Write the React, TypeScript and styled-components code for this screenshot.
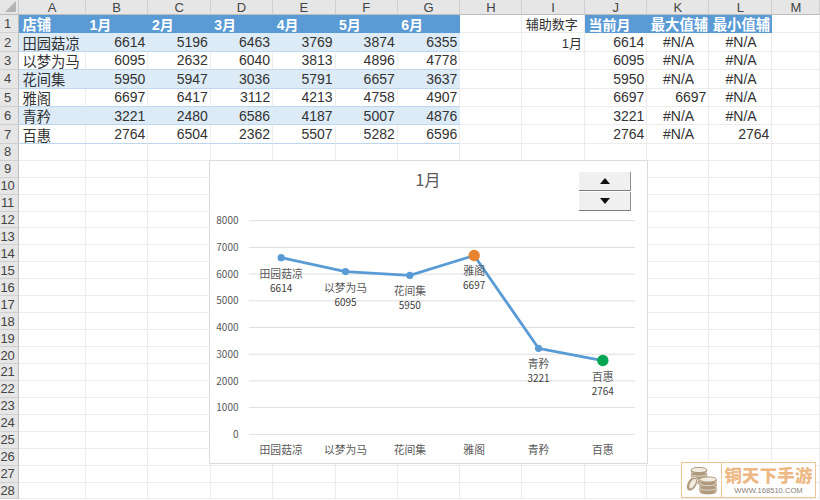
import React from 'react';
import styled, { createGlobalStyle } from 'styled-components';

const GlobalStyle = createGlobalStyle`
  html, body {
    margin: 0;
    padding: 0;
    background: #fff;
    overflow: hidden;
  }
  body {
    font-family: "Liberation Sans", "Noto Sans CJK SC", sans-serif;
  }
`;

const COLS = ['A', 'B', 'C', 'D', 'E', 'F', 'G', 'H', 'I', 'J', 'K', 'L', 'M'];
const MONTHS = ['1月', '2月', '3月', '4月', '5月', '6月'];

const shops = [
  { name: '田园菇凉', nums: [6614, 5196, 6463, 3769, 3874, 6355], max: '#N/A', min: '#N/A' },
  { name: '以梦为马', nums: [6095, 2632, 6040, 3813, 4896, 4778], max: '#N/A', min: '#N/A' },
  { name: '花间集', nums: [5950, 5947, 3036, 5791, 6657, 3637], max: '#N/A', min: '#N/A' },
  { name: '雅阁', nums: [6697, 6417, 3112, 4213, 4758, 4907], max: '6697', min: '#N/A' },
  { name: '青矜', nums: [3221, 2480, 6586, 4187, 5007, 4876], max: '#N/A', min: '#N/A' },
  { name: '百惠', nums: [2764, 6504, 2362, 5507, 5282, 6596], max: '#N/A', min: '2764' },
];

const Sheet = styled.div`
  position: relative;
  width: 820px;
  height: 500px;
  overflow: hidden;
  display: grid;
  grid-template-columns: 19px 67px 62.4px 62.4px 62.4px 62.4px 62.2px 62.6px 62px 62.6px 62.4px 62px 63px 48px;
  grid-template-rows: 15px repeat(7, 18.4px) 17px repeat(20, 16.95px);
  color: #333;
  font-size: 14px;
`;

const Corner = styled.div`
  background: #e6e6e6;
  border-right: 1px solid #c9c9c9;
  border-bottom: 1px solid #bdbdbd;
  box-sizing: border-box;
  position: relative;

  &::after {
    content: '';
    position: absolute;
    right: 2px;
    bottom: 2px;
    border-style: solid;
    border-width: 0 0 11px 11px;
    border-color: transparent transparent #b4b4b4 transparent;
  }
`;

const ColHead = styled.div`
  background: #e6e6e6;
  border-right: 1px solid #cfcfcf;
  border-bottom: 1px solid #bdbdbd;
  box-sizing: border-box;
  display: flex;
  align-items: center;
  justify-content: center;
  font-size: 13px;
  line-height: 15px;
  color: #444;
`;

const RowHead = styled.div`
  background: #e6e6e6;
  border-right: 1px solid #bdbdbd;
  border-bottom: 1px solid #d0d0d0;
  box-sizing: border-box;
  padding-right: 3px;
  display: flex;
  align-items: center;
  justify-content: center;
  font-size: 13px;
  color: #444;
  letter-spacing: -0.2px;
`;

type Tone = 'plain' | 'head' | 'band' | 'row';

const Cell = styled.div<{ $tone?: Tone; $align?: 'left' | 'right' | 'center' }>`
  box-sizing: border-box;
  min-width: 0;
  white-space: nowrap;
  overflow: visible;
  display: flex;
  align-items: center;
  padding: 0 2px 0 3.5px;
  justify-content: ${p =>
    p.$align === 'right' ? 'flex-end' : p.$align === 'center' ? 'center' : 'flex-start'};
  font-weight: ${p => (p.$tone === 'head' ? 700 : 400)};
  color: ${p => (p.$tone === 'head' ? '#fff' : '#333')};
  background: ${p =>
    p.$tone === 'head' ? '#5b9bd5' : p.$tone === 'band' ? '#ddebf7' : '#fff'};
  border-right: 1px solid
    ${p => (p.$tone === 'head' ? '#5b9bd5' : p.$tone === 'band' ? '#ddebf7' : '#ececec')};
  border-bottom: 1px solid
    ${p =>
      p.$tone === 'head'
        ? '#5b9bd5'
        : p.$tone === 'band' || p.$tone === 'row'
          ? '#bdd7ee'
          : '#ececec'};
`;

const NameCell = styled(Cell)`
  font-size: 14.3px;
`;

const HelperLabel = styled(Cell)`
  font-size: 13px;
`;

const ChartCard = styled.div`
  position: absolute;
  left: 209px;
  top: 160px;
  width: 439px;
  height: 304px;
  box-sizing: border-box;
  background: #fff;
  border: 1px solid #dcdcdc;
`;

const ChartSvg = styled.svg`
  display: block;
  position: absolute;
  left: -1px;
  top: -1px;
  font-family: "Noto Sans CJK SC", "Noto Sans", sans-serif;
`;

const Spinner = styled.div`
  position: absolute;
  left: 369px;
  top: 11px;
  width: 52px;
  display: flex;
  flex-direction: column;
  gap: 1px;
`;

const SpinButton = styled.button`
  width: 52px;
  height: 19px;
  padding: 0;
  margin: 0;
  background: #f0f0f0;
  border: none;
  border-right: 1px solid #8e8e8e;
  border-bottom: 1px solid #7d7d7d;
  display: flex;
  align-items: center;
  justify-content: center;
`;

const Watermark = styled.div`
  position: absolute;
  left: 681px;
  top: 462px;
  width: 135px;
  height: 36px;
  box-sizing: border-box;
  border: 1.5px solid #f0c596;
  background: rgba(255, 255, 255, 0.85);
  display: flex;
`;

const MarkIcon = styled.div`
  width: 40px;
  flex: none;
  border-right: 1.5px solid #f0c596;
  box-sizing: border-box;
  display: flex;
  align-items: center;
  justify-content: center;
`;

const MarkText = styled.div`
  flex: 1;
  min-width: 0;
  display: flex;
  flex-direction: column;
  align-items: center;
  justify-content: center;
  gap: 2px;
`;

const MarkTitle = styled.div`
  font-family: "Noto Sans CJK SC", sans-serif;
  font-size: 17.4px;
  font-weight: 900;
  line-height: 18px;
  letter-spacing: 0.2px;
  color: #edb883;
  white-space: nowrap;
`;

const MarkUrl = styled.div`
  font-size: 7.6px;
  line-height: 9px;
  color: #8a8078;
  white-space: nowrap;
`;

const X0 = 249;
const X1 = 635;
const Y0 = 434.3;
const SCALE = 0.0267;
const STEP = (X1 - X0) / 6;

const xAt = (i: number) => X0 + STEP * (i + 0.5);
const yAt = (v: number) => Y0 - v * SCALE;

// coordinates below are page based, the viewBox shifts them to the card
const LineChart: React.FC = () => {
  const values = shops.map(s => s.nums[0]);
  const max = Math.max(...values);
  const min = Math.min(...values);
  const points = values.map((v, i) => `${xAt(i)},${yAt(v)}`).join(' ');

  return (
    <ChartSvg width={439} height={304} viewBox="209 160 439 304">
      <text x={428} y={186} fontSize={16} fill="#595959" textAnchor="middle">1月</text>
      {[0, 1000, 2000, 3000, 4000, 5000, 6000, 7000, 8000].map(v => (
        <g key={v}>
          <line x1={X0} x2={X1} y1={yAt(v)} y2={yAt(v)} stroke="#dedede" strokeWidth={1} />
          <text x={238.5} y={yAt(v) + 3.6} fontSize={10} fill="#595959" textAnchor="end">{v}</text>
        </g>
      ))}
      <polyline points={points} fill="none" stroke="#5b9bd5" strokeWidth={2.8} strokeLinejoin="round" />
      {shops.map((s, i) => {
        const v = s.nums[0];
        const x = xAt(i);
        const y = yAt(v);
        const fill = v === max ? '#e8832f' : v === min ? '#00a651' : '#5b9bd5';
        return (
          <g key={s.name}>
            <circle cx={x} cy={y} r={v === max || v === min ? 5.7 : 3.6} fill={fill} />
            <text x={x} y={y + 20} fontSize={10.8} fill="#595959" textAnchor="middle">{s.name}</text>
            <text x={x} y={y + 34} fontSize={10} fill="#404040" textAnchor="middle">{v}</text>
            <text x={x} y={454} fontSize={10.8} fill="#595959" textAnchor="middle">{s.name}</text>
          </g>
        );
      })}
    </ChartSvg>
  );
};

const Arrow: React.FC<{ down?: boolean }> = ({ down }) => (
  <svg width={10} height={6} viewBox="0 0 10 6">
    <path d={down ? 'M0 0H10L5 6Z' : 'M5 0L10 6H0Z'} fill="#111" />
  </svg>
);

const Coin: React.FC<{ x: number; y: number; rx: number; top?: boolean }> = ({ x, y, rx, top }) => (
  <g>
    <rect x={x - rx} y={y} width={rx * 2} height={3.6} fill="#b09a7d" />
    <ellipse cx={x} cy={y + 3.6} rx={rx} ry={2.6} fill="#b09a7d" stroke="#fff" strokeWidth={0.6} />
    <ellipse cx={x} cy={y} rx={rx} ry={2.6} fill={top ? '#f3ece2' : '#b09a7d'} stroke="#b09a7d" strokeWidth={1} />
  </g>
);

const Coins: React.FC = () => (
  <svg width={34} height={30} viewBox="0 0 34 30">
    {[13, 9, 5].map(y => <Coin key={y} x={14} y={y} rx={8} top={y === 5} />)}
    <ellipse cx={7} cy={19} rx={4.6} ry={7.6} transform="rotate(30 7 19)" fill="#b09a7d" stroke="#fff" strokeWidth={0.6} />
    <ellipse cx={7.6} cy={18.6} rx={2.4} ry={5.4} transform="rotate(30 7.6 18.6)" fill="#f3ece2" />
    {[23.5, 19, 14.5].map(y => <Coin key={y} x={23} y={y} rx={8.6} top={y === 14.5} />)}
  </svg>
);

const App: React.FC = () => {
  return (
    <Sheet>
      <GlobalStyle />
      <Corner />
      {COLS.map(c => <ColHead key={c}>{c}</ColHead>)}

      <RowHead>1</RowHead>
      <NameCell $tone="head">店铺</NameCell>
      {MONTHS.map(m => <Cell key={m} $tone="head">{m}</Cell>)}
      <Cell />
      <HelperLabel>辅助数字</HelperLabel>
      <Cell $tone="head">当前月</Cell>
      <NameCell $tone="head">最大值辅</NameCell>
      <NameCell $tone="head">最小值辅</NameCell>
      <Cell />

      {shops.map((s, row) => {
        const tone: Tone = row % 2 === 0 ? 'band' : 'row';
        return (
          <React.Fragment key={s.name}>
            <RowHead>{row + 2}</RowHead>
            <NameCell $tone={tone}>{s.name}</NameCell>
            {s.nums.map((n, i) => <Cell key={i} $tone={tone} $align="right">{n}</Cell>)}
            <Cell />
            <HelperLabel $align="right">{row === 0 ? '1月' : ''}</HelperLabel>
            <Cell $align="right">{s.nums[0]}</Cell>
            <Cell $align={s.max === '#N/A' ? 'center' : 'right'}>{s.max}</Cell>
            <Cell $align={s.min === '#N/A' ? 'center' : 'right'}>{s.min}</Cell>
            <Cell />
          </React.Fragment>
        );
      })}

      {Array.from({ length: 21 }, (_, r) => (
        <React.Fragment key={r}>
          <RowHead>{r + 8}</RowHead>
          {COLS.map(c => <Cell key={c} />)}
        </React.Fragment>
      ))}

      <ChartCard>
        <LineChart />
        <Spinner>
          <SpinButton><Arrow /></SpinButton>
          <SpinButton><Arrow down /></SpinButton>
        </Spinner>
      </ChartCard>

      <Watermark>
        <MarkIcon><Coins /></MarkIcon>
        <MarkText>
          <MarkTitle>铜天下手游</MarkTitle>
          <MarkUrl>WWW.168510.COM</MarkUrl>
        </MarkText>
      </Watermark>
    </Sheet>
  );
};

export default App;
